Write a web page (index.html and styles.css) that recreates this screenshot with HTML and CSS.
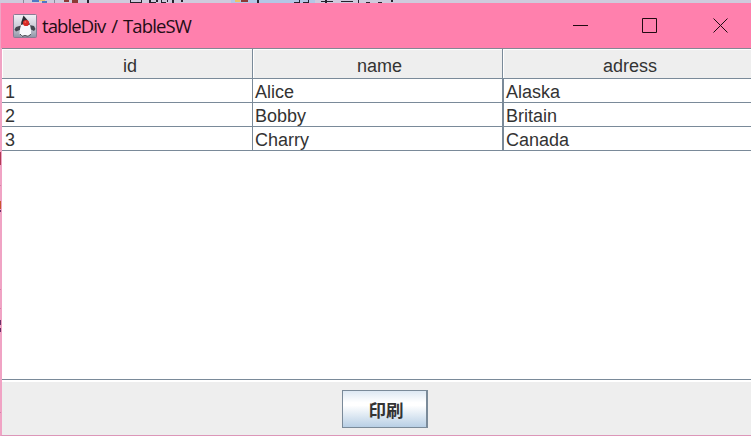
FILE: index.html
```html
<!DOCTYPE html>
<html lang="ja">
<head>
<meta charset="utf-8">
<title>tableDiv / TableSW</title>
<link rel="stylesheet" href="styles.css">
</head>
<body>
<div class="backdrop" aria-hidden="true">
  <svg width="751" height="3" viewBox="0 0 751 3">
    <path fill="#b4c6e6" d="M231 0h84v3h-84z"/>
    <path fill="#8a8998" d="M23 0h1v3h-1zM54 0h1v3h-1z"/>
    <path fill="#4d79c4" d="M32 0h7v2h-7zM42 1h5v2h-5z"/>
    <path fill="#e9c46a" d="M39 0h6v1h-6zM235 0h5v2h-5z"/>
    <path fill="#8b3a35" d="M64 0h5v2h-5zM72 0h6v3h-6zM241 0h7v2h-7z"/>
    <path fill="#25222d" d="M87 0h2v3h-2zM130 2h12v1h-12zM130 0h1v3h-1zM141 0h1v3h-1zM149 0h2v3h-2zM151 2h5v1h-5zM156 0h2v2h-2zM161 0h1v3h-1zM162 2h4v1h-4zM167 0h1v2h-1zM172 0h2v3h-2zM181 0h2v2h-2zM257 0h2v3h-2zM294 2h6v1h-6zM299 0h1v2h-1zM303 2h6v1h-6zM308 0h1v2h-1zM321 1h12v1h-12zM325 0h2v3h-2zM341 1h12v1h-12zM358 0h1v3h-1zM366 2h4v1h-4zM378 2h4v1h-4zM391 0h2v2h-2z"/>
  </svg>
</div>
<div class="window">
  <header class="titlebar">
    <svg class="app-icon" width="24" height="24" viewBox="0 0 24 24">
      <defs>
        <linearGradient id="tile" x1="0" y1="0" x2="0" y2="1">
          <stop offset="0" stop-color="#f2f0f6"/><stop offset=".6" stop-color="#c5c6d2"/><stop offset="1" stop-color="#8e95a6"/>
        </linearGradient>
      </defs>
      <rect x=".5" y=".5" width="23" height="23" rx="1" fill="url(#tile)" stroke="#8a7b94"/>
      <path fill="#45464f" d="M8 11.500L3 13l-1.500 2.500L3 17.500l5-2zM16.500 11l4.500 1 1.500 3-1.500 2-4-2z"/>
      <path fill="#2b2c34" d="M10.500 1.500l3.500 4 2.800 4.500.5 3H7.800l.5-5z"/>
      <path fill="#f7f7fa" d="M8 11l3-1 3 1.500 3-1 1 5.500v4.500l-3 2-3-1-3.500 1-2-2.500.5-5z"/>
      <path stroke="#45464f" fill="none" d="M7 20l2 2.300 3-.8 3 .8 3-2"/>
      <circle cx="13" cy="9" r="3.100" fill="#d92a26"/>
      <circle cx="12.300" cy="8" r="1" fill="#f0604f"/>
    </svg>
    <h1 class="title">tableDiv / TableSW</h1>
    <div class="controls">
      <svg width="178" height="45" viewBox="0 0 178 45" fill="none" stroke="#200b12">
        <path d="M0 22.500h15M69.500 15.500h14v14h-14zM140.500 15.500l14 14M154.500 15.500l-14 14"/>
      </svg>
    </div>
  </header>
  <main class="viewport">
    <table class="grid">
      <thead><tr><th>id</th><th>name</th><th>adress</th></tr></thead>
      <tbody>
        <tr><td>1</td><td>Alice</td><td>Alaska</td></tr>
        <tr><td>2</td><td>Bobby</td><td>Britain</td></tr>
        <tr><td>3</td><td>Charry</td><td>Canada</td></tr>
      </tbody>
    </table>
  </main>
  <footer class="actions"><button class="print" type="button">印刷</button></footer>
  <svg class="edge" width="2" height="433" viewBox="0 0 2 433" aria-hidden="true">
    <path fill="#b03a55" d="M0 149h1v13h-1z"/>
    <path fill="#c8562f" d="M0 198h1v8h-1z"/>
    <path fill="#6b2f66" d="M0 207h1v2h-1zM0 317h1v5h-1zM0 325h1v4h-1z"/>
    <path fill="#d383a8" d="M0 182h1v1h-1zM0 286h1v1h-1zM0 305h1v1h-1zM0 409h1v1h-1z"/>
  </svg>
</div>
</body>
</html>
```

FILE: styles.css
```css
* { box-sizing: border-box; }
body {
  margin: 0;
  width: 751px;
  height: 436px;
  overflow: hidden;
  background: #fff;
  color: #333;
  font-family: "Liberation Sans", "Noto Sans CJK JP", sans-serif;
}
.backdrop { height: 3px; background: #cfcadd; }
.backdrop svg { display: block; }
.window {
  position: relative;
  display: flex;
  flex-direction: column;
  height: 433px;
  border-left: 2px solid #f0a3c4;
  border-bottom: 1px solid #dc96b8;
}
.edge { position: absolute; left: -2px; top: 0; }
.titlebar {
  display: flex;
  align-items: center;
  height: 45px;
  margin-left: -1px;
  padding-left: 12px;
  background: #ff80ad;
}
.app-icon { flex: none; }
.title {
  margin: 0 0 0 5px;
  font: 400 18.500px/24px "Open Sans", "Noto Sans", sans-serif;
  letter-spacing: -0.9px;
  word-spacing: 2px;
  color: #230d15;
}
.controls { margin-left: auto; }
.controls svg { display: block; }
.viewport {
  height: 332px;
  border-top: 1px solid #858793;
  border-bottom: 1px solid #7a8a99;
  background: #fff;
}
.grid {
  width: 749px;
  table-layout: fixed;
  border-collapse: separate;
  border-spacing: 0;
  font-size: 18px;
}
.grid th, .grid td {
  padding: 0 0 0 2px;
  border-bottom: 1px solid #7a8a99;
}
.grid th {
  height: 30px;
  padding: 4px 0 0 6px;
  background: #eee;
  box-shadow: inset 1px 1px #fff;
  font-weight: 400;
  line-height: 24px;
}
.grid td { height: 24px; padding-top: 3px; line-height: 20px; text-align: left; }
.grid td:first-child { padding-left: 3px; }
.grid th:first-child { width: 251px; }
.grid th:nth-child(2) { width: 250px; padding-left: 4px; }
.grid th:not(:last-child), .grid td:first-child { border-right: 1px solid #7a8a99; }
.grid td:nth-child(2) { border-right: 1px solid #7a8a99; }
.grid td:last-child { border-left: 1px solid #7a8a99; }
.actions {
  display: flex;
  justify-content: center;
  flex: 1;
  padding: 8px 0 0 17px;
  border-top: 2px solid #fff;
  background: #eee;
}
.print {
  width: 86px;
  height: 38px;
  padding: 2px 0 0 3px;
  border: 1px solid #7a8a99;
  border-right-width: 2px;
  background: linear-gradient(#dde8f3, #fff 32%, #fff 40%, #b8cfe5);
  color: #333;
  font: 700 17.500px/24px "Noto Sans CJK JP", sans-serif;
}
```
